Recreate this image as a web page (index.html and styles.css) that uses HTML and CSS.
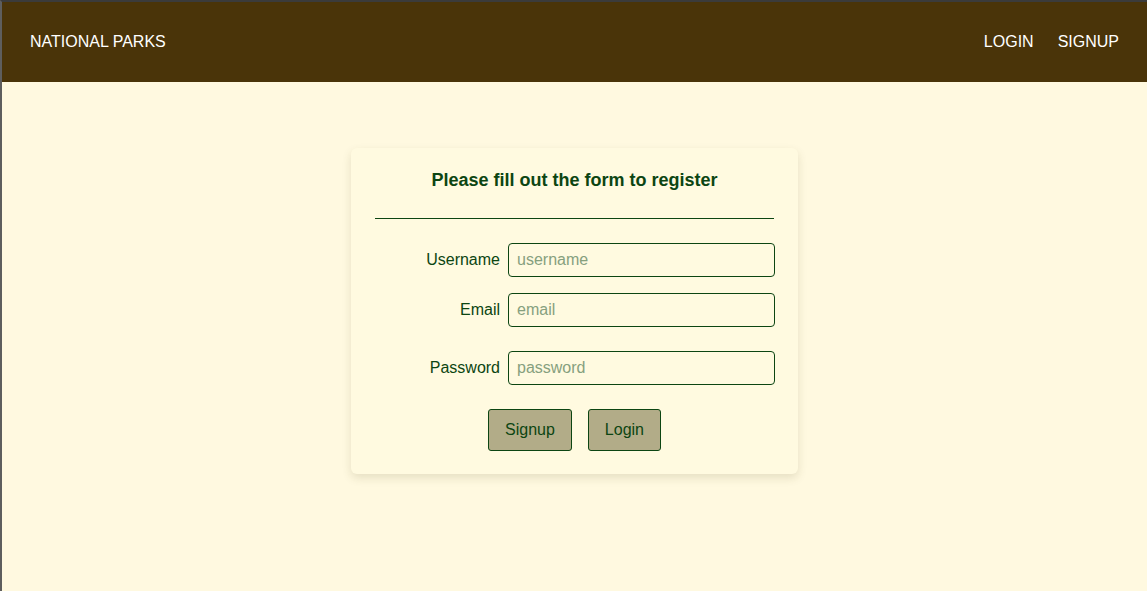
FILE: index.html
```html
<!DOCTYPE html>
<html lang="en">
<head>
<meta charset="utf-8">
<title>National Parks - Signup</title>
<link rel="stylesheet" href="styles.css">
</head>
<body>
<nav class="navbar">
  <a class="brand" href="#">NATIONAL PARKS</a>
  <div class="nav-links">
    <a href="#">LOGIN</a>
    <a href="#">SIGNUP</a>
  </div>
</nav>
<main class="content">
  <form class="card">
    <h2 class="title">Please fill out the form to register</h2>
    <hr class="rule">
    <div class="row">
      <label for="username">Username</label>
      <input id="username" type="text" placeholder="username">
    </div>
    <div class="row row-email">
      <label for="email">Email</label>
      <input id="email" type="email" placeholder="email">
    </div>
    <div class="row row-pass">
      <label for="password">Password</label>
      <input id="password" type="password" placeholder="password">
    </div>
    <div class="actions">
      <button type="button" class="btn">Signup</button>
      <button type="button" class="btn">Login</button>
    </div>
  </form>
</main>
</body>
</html>
```

FILE: styles.css
```css
* { box-sizing: border-box; }
html, body { height: 100%; }
body {
  margin: 0;
  background: #fff9e0;
  border-top: 2px solid #3b3b3b;
  border-left: 2px solid #5e5e5e;
  font-family: "Liberation Sans", Arial, sans-serif;
  font-size: 16px;
  color: #0c4512;
}
.navbar {
  height: 80px;
  background: #4a3409;
  display: flex;
  align-items: center;
  justify-content: space-between;
  padding: 0 28px;
}
.navbar a {
  color: #ffffff;
  text-decoration: none;
  font-size: 16px;
}
.nav-links {
  display: flex;
  gap: 24px;
}
.content {
  display: flex;
  justify-content: center;
  padding-top: 66px;
}
.card {
  width: 447px;
  background: #fffae0;
  border-radius: 6px;
  box-shadow: 0 4px 10px rgba(80, 70, 20, 0.14);
  padding: 21px 24px 23px;
}
.title {
  margin: 0;
  text-align: center;
  font-size: 18px;
  line-height: 22px;
  font-weight: bold;
  color: #0c4512;
}
.rule {
  margin: 27px 0 24px;
  border: 0;
  border-top: 1px solid #0c4512;
  height: 0;
}
.row {
  display: grid;
  grid-template-columns: 1fr 267px;
  column-gap: 8px;
  align-items: center;
  margin-bottom: 16px;
  margin-right: -1px;
}
.row-email { margin-bottom: 24px; }
.row-pass { margin-bottom: 24px; }
.row label {
  text-align: right;
  color: #0c4512;
}
.row input {
  height: 34px;
  border: 1px solid #0c4512;
  border-radius: 4px;
  background: #fffae0;
  padding: 0 8px;
  font-family: "Liberation Sans", Arial, sans-serif;
  font-size: 16px;
  color: #0c4512;
}
.row input::placeholder { color: #86a07e; }
.actions {
  display: flex;
  justify-content: center;
  gap: 16px;
}
.btn {
  background: #b2ac88;
  border: 1px solid #0c4512;
  border-radius: 3px;
  padding: 11px 16px;
  line-height: 18px;
  font-family: "Liberation Sans", Arial, sans-serif;
  font-size: 16px;
  color: #0c4512;
  cursor: pointer;
}
```
